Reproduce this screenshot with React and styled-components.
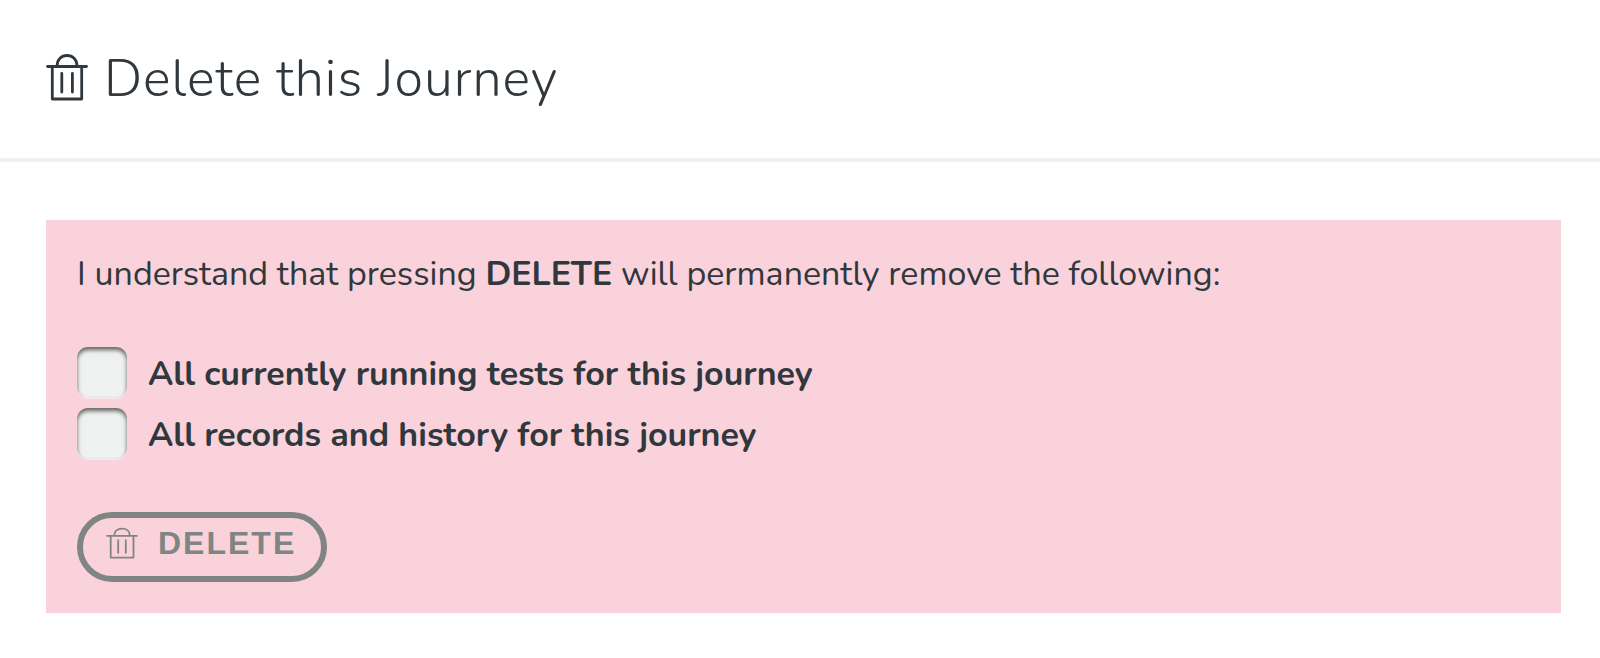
import React, { useState } from 'react'
import styled, { createGlobalStyle } from 'styled-components'

const GlobalStyle = createGlobalStyle`
  * {
    box-sizing: border-box;
  }

  body {
    margin: 0;
    background: #fff;
    color: #30383d;
    font-family: Nunito, Lato, sans-serif;
  }
`
const Header = styled.header`
  display: flex;
  align-items: center;
  gap: 16px;
  padding: 46px;
  border-bottom: 4px solid #eff1f1;
`
const Title = styled.h1`
  margin: 0;
  font-size: 52px;
  font-weight: 300;
  line-height: 66px;
  letter-spacing: 1px;
`
const Icon = styled.svg`
  flex: none;
  fill: none;
  stroke: currentColor;
  stroke-linecap: round;
  stroke-linejoin: round;
`
const Main = styled.main`
  padding: 58px 39px 46px 46px;
`
const WarningPanel = styled.form`
  padding: 32px 31px 31px;
  background: #fad2db;
`
const Message = styled.p`
  margin: 0 0 51px;
  font-size: 34px;
  line-height: 44px;
`
const Options = styled.div`
  display: grid;
  gap: 10px;
  margin-bottom: 53px;
`
const Option = styled.label`
  display: flex;
  align-items: center;
  gap: 21px;
  font-size: 34px;
  font-weight: 700;
  line-height: 48px;
`
const OptionText = styled.span`
  padding-top: 3px;
`
const Checkbox = styled.input`
  appearance: none;
  flex: none;
  width: 50px;
  height: 51px;
  margin: 0;
  border-radius: 11px;
  background: #eff1f0;
  box-shadow: inset 0 3px 4px rgba(0, 0, 0, 0.6), 0 1px 1px rgba(255, 255, 255, 0.5);

  &:checked {
    background: #7f8585;
  }
`
const DeleteButton = styled.button`
  display: flex;
  align-items: center;
  gap: 20px;
  height: 70px;
  padding: 0 25px 9px 23px;
  border: 6px solid #7f8585;
  border-radius: 35px;
  background: transparent;
  color: #7f8585;
  font-family: 'Liberation Sans', Arial, sans-serif;
  font-size: 32px;
  font-weight: 700;
  line-height: 40px;
  letter-spacing: 2px;
`

const TrashIcon = () => (
  <Icon width="42" height="50" viewBox="0 0 42 50" strokeWidth="2.8" aria-hidden="true">
    <path d="M1.5 12.5h39M6.3 12.5V45h29.4V12.5M11.2 12v-.7c0-5.8 4.2-9.8 9.8-9.8s9.9 4 9.9 9.8v.7M15.8 19.5V38M26.4 19.5V38" />
  </Icon>
)

const SmallTrashIcon = () => (
  <Icon width="32" height="32" viewBox="0 0 32 32" strokeWidth="1.8" aria-hidden="true">
    <path d="M1 8.8h30M4.7 8.8v21.8h22.8V8.8M8.3 8.3C8.3 4 11.5 1.6 16 1.6s7.8 2.4 7.8 6.7M12.2 13.2v12.6M19.8 13.2v12.6" />
  </Icon>
)

const options = [
  { id: 'tests', label: 'All currently running tests for this journey' },
  { id: 'records', label: 'All records and history for this journey' },
]

const App = () => {
  const [checked, setChecked] = useState({})

  const toggle = (id) => setChecked({ ...checked, [id]: !checked[id] })

  return (
    <>
      <GlobalStyle />
      <Header>
        <TrashIcon />
        <Title>Delete this Journey</Title>
      </Header>
      <Main>
        <WarningPanel onSubmit={(e) => e.preventDefault()}>
          <Message>
            I understand that pressing <strong>DELETE</strong> will permanently remove the following:
          </Message>
          <Options>
            {options.map(({ id, label }) => (
              <Option key={id} htmlFor={id}>
                <Checkbox type="checkbox" id={id} checked={!!checked[id]} onChange={() => toggle(id)} />
                <OptionText>{label}</OptionText>
              </Option>
            ))}
          </Options>
          <DeleteButton type="submit" disabled={!options.every(({ id }) => checked[id])}>
            <SmallTrashIcon />
            DELETE
          </DeleteButton>
        </WarningPanel>
      </Main>
    </>
  )
}

export default App
